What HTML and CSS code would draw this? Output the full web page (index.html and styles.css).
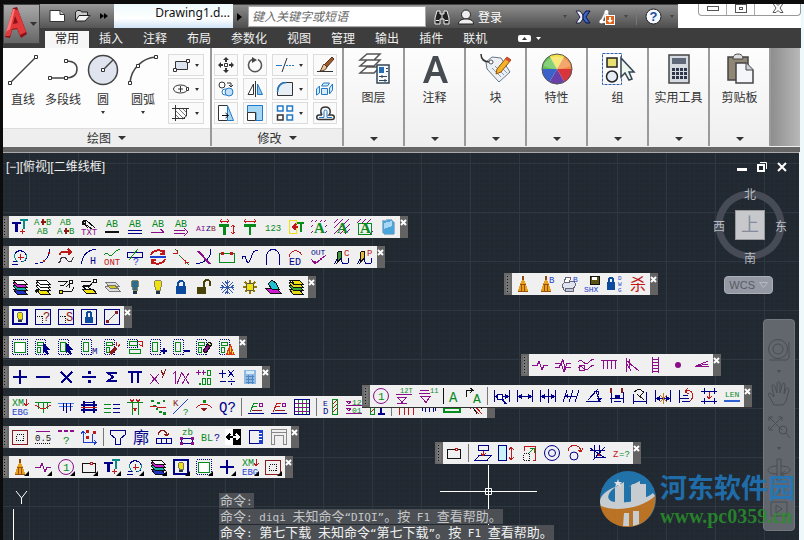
FILE: index.html
```html
<!DOCTYPE html>
<html lang="zh-CN">
<head>
    <meta charset="UTF-8">
    <meta name="viewport" content="width=device-width, initial-scale=1.0">
    <title>Drawing1.dwg</title>
    <link rel="stylesheet" href="styles.css">
</head>
<body>
<div class="app">
    <header class="header">
        <button class="logo" aria-label="应用程序菜单">
            <svg width="36" height="38" viewBox="0 0 36 38">
                <path fill="#8c1016" d="M1 32 9 3l4-1 10 27-6 4-4-9-5 1-2 8z"/>
                <path fill="#e23a3c" d="M1 31 9 4l5 1 8 22-6 3-3-7-5 1-2 7z"/>
                <path fill="#f77" d="M9 4l2 0-5 20-4 3z"/>
                <path fill="#8c1016" d="M9 19l2-8 3 7z"/>
                <path fill="#333" d="M26 17h7l-3.500 4z"/>
            </svg>
        </button>
        <div class="header-main">
            <div class="titlebar">
                <div class="quick">
                    <button aria-label="新建"><svg width="17" height="14" viewBox="0 0 17 14"><path fill="#fff" stroke="#333" d="M1 1.500h10l4.500 4v7H1z"/><path fill="#ccc" stroke="#333" d="M11 1.500v4h4.500"/></svg></button>
                    <button aria-label="打开"><svg width="17" height="14" viewBox="0 0 17 14"><path fill="#ccc" stroke="#222" d="M1.500 12V3l2-1.500h3l1 1.500h6v3"/><path fill="#f4f4f4" stroke="#222" d="M1.500 12 5 6.500h11L11 12z"/></svg></button>
                    <button aria-label="更多"><svg width="10" height="8" viewBox="0 0 10 8"><path d="M1 1l4 3-4 3zM5 1l4 3-4 3z"/></svg></button>
                </div>
                <div class="doc-title">Drawing1.d...</div>
                <div class="infobar">
                    <button class="expand" aria-label="展开"><svg width="5" height="8" viewBox="0 0 5 8"><path d="M0 0l5 4-5 4z"/></svg></button>
                    <input class="search" type="text" placeholder="键入关键字或短语" aria-label="搜索">
                    <button aria-label="查找"><svg width="16" height="16" viewBox="0 0 16 16"><path fill="#222" stroke="#eee" d="M3 2h3v3h4V2h3l2 7v6h-5v-5H6v5H1V9z"/><path stroke="#eee" d="M2 11.500h3M11 11.500h3M8 5v5"/></svg></button>
                    <button class="signin"><svg width="16" height="16" viewBox="0 0 16 16"><circle cx="8" cy="5.500" r="4.500" fill="#eee" stroke="#222"/><path fill="#eee" stroke="#222" d="M.5 15c0-4 4-5 7.500-5s7.500 1 7.500 5z"/></svg>登录</button>
                    <span class="spacer"></span>
                    <span class="caret dim"></span>
                    <button aria-label="Exchange"><svg width="16" height="14" viewBox="0 0 16 14"><path fill="#e8eefc" stroke="#224" d="M1 1h4l3 4v4l-3 4H1l4-6z"/><path fill="#3565c4" stroke="#114" d="M15 1h-4L8 5v4l3 4h4l-4-6z"/></svg></button>
                    <button aria-label="通讯"><svg width="17" height="16" viewBox="0 0 17 16"><path stroke="#eee" stroke-width="2" fill="none" d="M7 3 2 13h6M7 3l4 7"/><circle cx="7.500" cy="3" r="2" fill="#fff"/><circle cx="2.500" cy="12.500" r="2" fill="#fff"/><rect x="6.500" y="6.500" width="9" height="9" fill="#dd641c" stroke="#fff"/><path fill="#fff" d="M10 8h2v3h2l-3 3-3-3h2z"/></svg></button>
                    <span class="caret dim"></span>
                    <span class="rule"></span>
                    <button aria-label="帮助"><svg width="17" height="17" viewBox="0 0 17 17"><circle cx="8.500" cy="8.500" r="7.500" fill="#f4f8ff" stroke="#222"/><text x="8.500" y="13" font-size="13" font-weight="bold" text-anchor="middle" fill="#1d4aa0">?</text></svg></button>
                    <span class="caret dim"></span>
                </div>
                <div class="win-area">
                    <div class="win-buttons">
                        <button aria-label="最小化"><svg width="12" height="5" viewBox="0 0 12 5"><rect x=".5" y=".5" width="11" height="4" fill="#fff" stroke="#555"/></svg></button>
                        <button aria-label="最大化"><svg width="12" height="9" viewBox="0 0 12 9"><rect x=".5" y=".5" width="11" height="8" fill="#fff" stroke="#555"/><rect x="4.500" y="3.500" width="3" height="2" fill="#fff" stroke="#555"/></svg></button>
                        <button class="wide" aria-label="关闭"><svg width="12" height="10" viewBox="0 0 12 10"><path fill="#fff" stroke="#555" d="M1 .5h3l2 2 2-2h3L8 5l3 4.500H8l-2-2-2 2H1L4 5z"/></svg></button>
                    </div>
                </div>
            </div>
            <nav class="tabs">
                <a class="tab active" href="#">常用</a>
                <a class="tab" href="#">插入</a>
                <a class="tab" href="#">注释</a>
                <a class="tab" href="#">布局</a>
                <a class="tab" href="#">参数化</a>
                <a class="tab" href="#">视图</a>
                <a class="tab" href="#">管理</a>
                <a class="tab" href="#">输出</a>
                <a class="tab" href="#">插件</a>
                <a class="tab" href="#">联机</a>
                <button class="ribbon-toggle" aria-label="最小化功能区"><svg width="24" height="7" viewBox="0 0 24 7"><rect width="13" height="7" rx="2" fill="#fff"/><path fill="#333" d="M4 5h5L6.500 2z"/><path fill="#fff" d="M18 2h5l-2.500 3z"/></svg></button>
            </nav>
        </div>
    </header>

    <section class="ribbon">
        <div class="panel draw">
            <div class="panel-body">
                <button class="big"><svg width="32" height="32" viewBox="0 0 32 32"><path class="ln" d="M3 29 29 3"/><path class="pt" d="M1.500 27.500h3v3h-3zM27.500 1.500h3v3h-3z"/></svg>直线</button>
                <button class="big"><svg width="32" height="32" viewBox="0 0 32 32"><path class="ln" d="M3 24h15c7 0 12-2 12-9s-6-8-11-8"/><path class="pt" d="M1.500 22.500h3v3h-3zM17.500 22.500h3v3h-3zM17.500 5.500h3v3h-3z"/></svg>多段线</button>
                <button class="big"><svg width="32" height="32" viewBox="0 0 32 32"><circle cx="16" cy="16" r="14.500" fill="#dfe4ef" stroke="#444" stroke-width="1.500"/><path class="ln" d="M16 16 26 6"/><path class="pt" d="M14.500 14.500h3v3h-3z"/></svg>圆<span class="caret"></span></button>
                <button class="big"><svg width="32" height="32" viewBox="0 0 32 32"><path class="ln" d="M3 29C4 15 15 4 29 3"/><path class="pt" d="M1.500 27.500h3v3h-3zM9.500 10.500h3v3h-3zM27.500 1.500h3v3h-3z"/></svg>圆弧<span class="caret"></span></button>
                <div class="small-grid one">
                    <button class="small split" aria-label="矩形"><svg width="18" height="16" viewBox="0 0 18 16"><path fill="#dde3ee" stroke="#333" d="M3.500 4.500h12v8h-12z"/><path class="pt" d="M1.500 11.500h3v3h-3zM14.500 2.500h3v3h-3z"/></svg><span class="caret"></span></button>
                    <button class="small split" aria-label="椭圆"><svg width="18" height="16" viewBox="0 0 18 16"><ellipse cx="8.500" cy="8" rx="7" ry="4" fill="none" stroke="#333"/><path stroke="#333" d="M8.500 5v6M6 8h5"/><path class="pt" d="M14.500 6.500h2v3h-2z"/></svg><span class="caret"></span></button>
                    <button class="small split" aria-label="图案填充"><svg width="18" height="16" viewBox="0 0 18 16"><path fill="none" stroke="#333" d="M3.500 0v16M0 3.500h17M14.500 3v8l-4 3M0 13.500h13"/><path stroke="#777" d="M4 6l7 7M4 10l3 3M7 4l7 7M11 4l3 3"/></svg><span class="caret"></span></button>
                </div>
            </div>
            <button class="panel-title">绘图<span class="caret large"></span></button>
        </div>

        <div class="panel modify">
            <div class="panel-body">
                <div class="small-grid">
                    <button class="small" aria-label="移动"><svg width="16" height="16" viewBox="0 0 16 16"><path fill="#333" d="M8 0l3 3H9v2H7V3H5zM8 16l3-3H9v-2H7v2H5zM0 8l3-3v2h2v2H3v2zM16 8l-3-3v2h-2v2h2v2z"/><path class="pt" d="M6.500 6.500h3v3h-3z"/></svg></button>
                    <button class="small" aria-label="旋转"><svg width="16" height="16" viewBox="0 0 16 16"><path fill="none" stroke="#555" stroke-width="1.500" d="M11 2.500A6.500 6.500 0 1 1 5 2.500"/><path fill="#444" d="M5 0l5 3-5 3z"/></svg></button>
                    <button class="small split" aria-label="修剪"><svg width="18" height="16" viewBox="0 0 18 16"><path stroke="#2279c8" d="M0 8.500h6M10 8.500h2M13 8.500h2M16 8.500h2"/><path stroke="#333" d="M11 1 6 15"/></svg><span class="caret"></span></button>
                    <button class="small" aria-label="删除"><svg width="18" height="16" viewBox="0 0 18 16"><path stroke="#333" d="M1 14.500h16"/><path fill="#9c5a28" stroke="#532" d="M16 0l2 2-7 8-3-2z"/><path fill="#e8c898" stroke="#532" d="M8 7l3 3c-1 3-4 4-7 4 2-2 2-5 4-7z"/></svg></button>
                    <button class="small" aria-label="复制"><svg width="16" height="16" viewBox="0 0 16 16"><circle cx="4" cy="4" r="3" fill="#fff" stroke="#333"/><circle cx="7" cy="11" r="3" fill="#fff" stroke="#2279c8"/><circle cx="11" cy="11" r="4" fill="#bfe0f8" stroke="#2279c8"/><path fill="none" stroke="#333" d="M9 2h4v4M11 4l2 2 2-2"/></svg></button>
                    <button class="small" aria-label="镜像"><svg width="16" height="16" viewBox="0 0 16 16"><path fill="#fff" stroke="#333" d="M1 13.500 6.500 3v10.500z"/><path stroke="#333" d="M8.500 0v16"/><path fill="#8cc6f0" stroke="#2279c8" d="M15.500 13.500 10.500 3v10.500z"/></svg></button>
                    <button class="small split" aria-label="圆角"><svg width="18" height="16" viewBox="0 0 18 16"><path fill="#e8eef5" stroke="#333" d="M9 1.500h7.500v13h-15V10C1.500 5 4 1.500 9 1.500"/><path fill="none" stroke="#2279c8" stroke-width="1.500" d="M1.500 11c0-6 4-9.500 9-9.500"/></svg><span class="caret"></span></button>
                    <button class="small" aria-label="分解"><svg width="18" height="16" viewBox="0 0 18 16"><path fill="#d6ecfb" stroke="#2279c8" d="M5.500 7.500h6v6h-6zM5.500 5l2-3h6l-2 3zM13.500 7l3-4v6l-3 4zM3.500 5v7l-3 2V8z"/></svg></button>
                    <button class="small" aria-label="拉伸"><svg width="16" height="16" viewBox="0 0 16 16"><path fill="#fff" stroke="#333" d="M9 .5H.5v15h9"/><path fill="#a8d8f4" stroke="#2279c8" d="M9.500.5 15.500 15.500h-6z"/><path stroke="#111" fill="none" d="M4 10.500h6M7.500 8l3 2.500-3 2.500"/></svg></button>
                    <button class="small" aria-label="缩放"><svg width="16" height="16" viewBox="0 0 16 16"><path fill="#a8d8f4" stroke="#2279c8" d="M.5.500h15v15H9v-8H.5z"/><path fill="#fff" stroke="#333" d="M.5 7.500h8v8h-8z"/></svg></button>
                    <button class="small split" aria-label="阵列"><svg width="18" height="16" viewBox="0 0 18 16"><path fill="#fff" stroke="#2279c8" stroke-width="1.500" d="M1.500 1h5.500v5H1.500zM11 1h5.500v5H11zM11 10h5.500v5H11z"/><path fill="#fff" stroke="#333" stroke-width="1.500" d="M1.500 10h5.500v5H1.500z"/></svg><span class="caret"></span></button>
                    <button class="small" aria-label="偏移"><svg width="18" height="16" viewBox="0 0 18 16"><path fill="none" stroke="#333" stroke-width="1.500" d="M6 10H3a2 2 0 0 0 0 4.500h13a2 2 0 0 0 0-4.500h-3c2-2 2-8-3.500-8S4 7 6 10"/><path fill="none" stroke="#2279c8" d="M3 12.500h5V6.500a1.500 1.500 0 0 1 3 0v6h5"/></svg></button>
                </div>
            </div>
            <button class="panel-title">修改<span class="caret large"></span></button>
        </div>

        <button class="panel single">
            <svg width="32" height="32" viewBox="0 0 32 32"><path fill="#fff" stroke="#555" stroke-width="1.500" d="M2 20 9 14h13l-6 6zM2 13 9 7h13l-6 6zM2 7l7-6h13l-6 6z"/><path fill="#f5f9fd" stroke="#345" stroke-width="1.500" d="M19 12h12v18H19z"/><path fill="#246cb4" d="M21 14h5v6h-5z"/><path stroke="#345" d="M28 15.500h2M28 18.500h2M21 23.500h8M21 27.500h8M24 22v3M27 26v3"/></svg>
            图层<span class="caret large"></span></button>
        <button class="panel single">
            <svg width="32" height="32" viewBox="0 0 32 32"><path fill="#474b52" fill-rule="evenodd" d="M14 3h5l10 27h-5l-3-7h-9l-3 7H4zM13 19h7L16.500 8z"/></svg>
            注释<span class="caret large"></span></button>
        <button class="panel single">
            <svg width="32" height="32" viewBox="0 0 32 32"><path fill="#edf1f6" stroke="#678" d="M6 9l6-5 9 1 9 14-11 10L7 16z"/><path fill="none" stroke="#333" stroke-width="1.500" d="M1 1c0 6 4 8 9 8"/><circle cx="11" cy="9" r="2" fill="#fff" stroke="#555"/><path stroke="#89a" d="M12 15l9 9M15 13l9 9M19 12l8 8"/><path fill="#f3b229" stroke="#8a5410" d="M27 4l4 3-10 12-5 2 1-5z"/><path fill="#d43" d="M27 4l4 3-2 2-4-3z"/></svg>
            块<span class="caret large"></span></button>
        <button class="panel single">
            <svg width="32" height="32" viewBox="0 0 32 32"><path fill="#f4e04c" d="M16 16 8.500 3a15 15 0 0 1 15 0z"/><path fill="#f08a3c" d="M16 16 23.500 3A15 15 0 0 1 31 16z"/><path fill="#d8343c" d="M16 16h15a15 15 0 0 1-7.500 13z"/><path fill="#6a3fa8" d="M16 16l7.500 13a15 15 0 0 1-15 0z"/><path fill="#3a62c8" d="M16 16 8.500 29A15 15 0 0 1 1 16z"/><path fill="#5fc04c" d="M16 16H1A15 15 0 0 1 8.500 3z"/><path fill="#fff" opacity=".25" d="M2 13a15 15 0 0 1 28 0c-9 4-19 4-28 0z"/><circle cx="16" cy="16" r="15" fill="none" stroke="#555"/></svg>
            特性<span class="caret large"></span></button>
        <button class="panel single">
            <svg width="32" height="32" viewBox="0 0 32 32"><path fill="none" stroke="#2f5fae" stroke-dasharray="3 1" d="M.5.500h19v31H.5z"/><path fill="#e8e070" stroke="#222" stroke-width="1.500" d="M5 5h10v9H5z"/><circle cx="10" cy="23.500" r="5.500" fill="#e4ecf5" stroke="#222" stroke-width="1.500"/><path fill="#eef7ee" stroke="#345" stroke-width="1.500" d="M19 5v19l4-4 4 7 3-1-3-7h5z"/></svg>
            组<span class="caret large"></span></button>
        <button class="panel single">
            <svg width="32" height="32" viewBox="0 0 32 32"><path fill="#d6dae2" stroke="#444" stroke-width="1.500" d="M6 2h20v28H6z"/><path fill="#60697a" d="M9 5h14v6H9z"/><path stroke="#2e3848" stroke-width="3" stroke-dasharray="3 1" d="M9 16.500h15M9 20.500h15M9 24.500h15"/></svg>
            实用工具<span class="caret large"></span></button>
        <button class="panel single">
            <svg width="32" height="32" viewBox="0 0 32 32"><path fill="#8f8674" stroke="#444" stroke-width="1.500" d="M4 4h20v23H4z"/><path fill="#ddd" stroke="#444" d="M9 5c0-3 3-4 5-4s5 1 5 4v1H9z"/><path fill="#f4f6fa" stroke="#444" stroke-width="1.500" d="M12 10h10l7 7v13H12z"/><path fill="#cdd3dc" stroke="#444" d="M22 10v7h7"/></svg>
            剪贴板<span class="caret large"></span></button>
        <div class="ribbon-rest"></div>
    </section>

    <main class="canvas">
        <div class="view-label">[−][俯视][二维线框]</div>

        <div class="dock">
            <div class="toolbar" data-tools="tt abTop abBottom txt abLine abDouble abHalf abArrow aizb tBoth tWide n123 tInsert hatch1 hatch2 hatch3 book"></div>
            <div class="toolbar" data-tools="findArc joinArc redCurve arcH waveOnt boxAsk turn scatterLine crossArc rail wave arch ed out penC penP"></div>
            <div class="toolbar" data-tools="layers layerPick layerNode layerMatch layerOne bulbOff bulb lock unlock snow sun layerCyan layerGreen"></div>
            <div class="toolbar" data-tools="frameBulb frameAsk frameS frameLock frameLine"></div>
            <div class="toolbar" data-tools="sel selPick selArrow selM selWand selCopy selPlus selMinus selErase selFire"></div>
            <div class="toolbar" data-tools="plus minus times divide sigma pi power inverse digits operators calc"></div>
            <div class="toolbar" data-tools="xmebg beamRed beamBlue beamThick dashes legs scatter kAsk pin qAsk | sectGreen sectRed grid | ebd levels section | pilesRed pilesBlue slab steel"></div>
            <div class="toolbar" data-tools="frameRed scale05 askDash ucs | funnel kuo tiles zb bl swap panel gate"></div>
            <div class="toolbar flyouts" data-tools="broom breakLine circle1 rectDot tt findArc layers frameBulb sel plus xmebg frameRed"></div>
        </div>

        <div class="toolbar float purge" data-tools="broom broomB printB shx dwg kill"></div>
        <div class="toolbar float symbols" data-tools="breakLine breakDouble waves comb fan ladder dot angle"></div>
        <div class="toolbar float dims" data-tools="circle1 level12 levelMark axisA cornerA | dimFind dimLinear dimSplit dimSkew dimAngle dimBreak dimEdit dimJoin dimBack dimBox len"></div>
        <div class="toolbar float edit" data-tools="rectDot | project stretch corner rings spin cross zAsk"></div>

        <div class="doc-buttons">
            <button aria-label="最小化"><svg width="10" height="10" viewBox="0 0 10 10"><path fill="#fff" d="M0 6h10v3H0z"/></svg></button>
            <button aria-label="还原"><svg width="10" height="10" viewBox="0 0 10 10"><path fill="none" stroke="#fff" d="M3 .5h6.500V7"/><path fill="none" stroke="#fff" stroke-width="2" d="M1 3h6v6H1z"/></svg></button>
            <button aria-label="关闭"><svg width="10" height="10" viewBox="0 0 10 10"><path stroke="#fff" stroke-width="2" d="M1 1l8 8M9 1 1 9"/></svg></button>
        </div>

        <div class="viewcube">
            <span class="north">北</span>
            <span class="west">西</span>
            <button class="face">上</button>
            <span class="east">东</span>
            <span class="south">南</span>
        </div>
        <button class="wcs">WCS<svg width="9" height="6" viewBox="0 0 9 6"><path fill="none" stroke="#b5b9c2" d="M.5.500h8l-4 5z"/></svg></button>

        <div class="navbar">
            <button aria-label="全导航控制盘"><svg width="24" height="24" viewBox="0 0 24 24"><circle cx="11" cy="11" r="9.500"/><circle cx="11" cy="11" r="5"/><path d="M2 22h18l2-2V4"/></svg></button>
            <span class="caret"></span>
            <button aria-label="平移"><svg width="24" height="26" viewBox="0 0 24 26"><path d="M7 24 2 15c-2-3 1-4 3-1l2 2L5 6c0-3 2-3 3 0l2 6V3c0-3 3-3 3 0v9l2-8c1-3 3-2 3 0l-1 9 2-5c1-2 3-1 3 1l-3 11-3 4z"/></svg></button>
            <button aria-label="缩放"><svg width="24" height="24" viewBox="0 0 24 24"><path d="M2 2l13 13M15 2 2 15M2 6V2h4M11 2h4v4M2 11v4h4"/><circle cx="16" cy="15" r="4"/><path d="M19 18l4 5"/></svg></button>
            <span class="caret"></span>
            <button aria-label="动态观察"><svg width="24" height="24" viewBox="0 0 24 24"><path d="M10 1h4v22h-4zM10 8C4 8 1 10 1 12s3 4 9 4M14 8c6 0 9 2 9 4s-3 4-9 4M18 13l-4 3 4 3"/></svg></button>
            <span class="caret"></span>
            <button aria-label="ShowMotion"><svg width="18" height="16" viewBox="0 0 18 16"><path d="M1 1h16v14H1zM6 4l6 4-6 4z"/></svg></button>
        </div>

        <svg class="crosshair" width="97" height="97" viewBox="0 0 97 97"><path d="M0 48.500h97M48.500 0v97"/><path d="M45.500 45.500h6v6h-6z"/></svg>
        <svg class="ucs-axis" width="20" height="54" viewBox="0 0 20 54"><path d="M5 1l5.500 7L16 1M10.500 8v6M2.500 19v35"/></svg>

        <div class="command">
            <p class="old">命令<code>:</code></p>
            <p class="old">命令<code>: diqi </code>未知命令<code>“DIQI”</code>。按<code> F1 </code>查看帮助。</p>
            <p>命令<code>: </code>第七下载<code> </code>未知命令<code>“</code>第七下载<code>”</code>。按<code> F1 </code>查看帮助。</p>
        </div>

        <div class="watermark">
            <svg width="58" height="58" viewBox="0 0 58 58">
                <circle cx="29" cy="29" r="28" fill="#2380c0"/>
                <path fill="#d57f22" d="M1 34c8 8 45 4 55-10 3 16-9 33-27 33C15 57 3 48 1 34z"/>
                <path fill="#e4e9ed" d="M2 36c-4-8 4-15 14-19-7 6-9 11-4 14 12 4 34-1 42-8l2 3C45 37 18 43 2 36z"/>
                <path fill="#e4e9ed" d="M16 35V18l-3 1 12-7v23zM32 33V16l-3 1 12-6v22zM32 14h15v17h-7V18zM25 43h5v13h-6zM34 41h6v13l-6 2z"/>
                <path fill="#fff" d="M19 9l1 3h3l-2 2 1 3-3-2-3 2 1-3-2-2h3z"/>
            </svg>
            <div>
                <div class="site">河东软件园</div>
                <div class="url">www.pc0359.cn</div>
            </div>
        </div>
    </main>
</div>

<script>
    const NAVY = '#00008b', GREEN = '#078a1c', PURPLE = '#8a0d8a', RED = '#c01818', DARK = '#8b1a1a',
          BLACK = '#111', BLUE = '#1f3fd0', TEAL = '#078a8a', YELLOW = '#f0e010';

    // line, filled shape, text
    const l = (c, d, w = 1) => `<path fill="none" stroke="${c}" stroke-width="${w}" d="${d}"/>`;
    const f = (c, d, s = 'none') => `<path fill="${c}" stroke="${s}" d="${d}"/>`;
    const t = (c, x, y, s, size = 9) => `<text fill="${c}" x="${x}" y="${y}" font-size="${size}">${s}</text>`;
    const dots = (c, d) => `<path fill="none" stroke="${c}" stroke-dasharray="1 1" d="${d}"/>`;
    const o = (c, x, y, r, fill = 'none') => `<circle cx="${x}" cy="${y}" r="${r}" fill="${fill}" stroke="${c}"/>`;

    const ab = t(GREEN, 2, 8, 'AB', 10);
    const bigA = t(GREEN, 3, 14, 'A', 15).replace('<text', '<text class="serif"');
    const selBox = dots(NAVY, 'M.5.500h10v15H.5z') + l(GREEN, 'M2.500 3.500h5v9h-5z');
    const selPart = dots(NAVY, 'M.5.500h10v15H.5z') + l(GREEN, 'M2.500 3.500h6v3h-6zM2.500 8.500h3v5h-3z');
    const blueFrame = l(NAVY, 'M.5.500h15v15H.5z');
    const stack = (a, b, c) => f(c, 'M1 10l4 5h10l-4-5z', BLACK) + f(b, 'M1 7l4 4h10l-4-5z', BLACK) + f(a, 'M1 4l4 4h10l-4-5z', BLACK) + f('#fff', 'M1 1h10l4 4H5z', BLACK);
    const bulbAt = (c) => f(c, 'M8 1c3 0 4 2 4 4 0 3-2 3-2 6H6c0-3-2-3-2-6 0-2 1-4 4-4z', '#886') + f('#234', 'M6 12h4v3H6z');
    const lockAt = f('#0b4a9c', 'M3 7h10v8H3z') + l('#0b4a9c', 'M5 8V5a3 3 0 0 1 6 0v3', 2);
    const cursor = f(NAVY, 'M8 4v10l2-2 2 4 2-1-2-4h4z');
    const dim = l(NAVY, 'M.5 2v12M15.500 2v12M1 8.500h14') + f(NAVY, 'M1 8.500l4-3v6zM15 8.500l-4-3v6z');
    const broomAt = f('#8a4a10', 'M7 0h2v5H7z') + f('#e8a020', 'M7 4h2l2 4 2 7H3l2-7z') + l('#9a5208', 'M5 8.500h6M7 9l-1 6M9 9l1 6M3 15.500h10');
    const pen = (c) => l(NAVY, 'M0 15c4-4 3-8 6-8s0 8 4 8 5-1 5-6') + f(c, 'M4 3l3-1 1 6-5 6z', BLACK);

    const icons = {
        tt: f(NAVY, 'M0 3h9v2H6v8H3V5H0z') + f(TEAL, 'M8 0h8v2h-3v8h-2V2H8z') + l(RED, 'M10.500 10v5M8 12.500h5'),
        abTop: t(GREEN, -1, 6, 'A', 9) + t(GREEN, 11, 6, 'B', 9) + l(DARK, 'M8 0v6M6 3h5', 2) + t(GREEN, 2, 15, 'AB', 9),
        abBottom: t(GREEN, 2, 6, 'AB', 9) + t(GREEN, -1, 15, 'A', 9) + t(GREEN, 11, 15, 'B', 9) + l(DARK, 'M8 9v6M6 12h5', 2),
        txt: l(BLACK, 'M2 1l3 0 9 8M1 3l10 7M4 6l3 3') + o(BLACK, 3, 4, 2) + t(PURPLE, 0, 16, 'TXT', 9),
        abLine: ab + l(BLACK, 'M1 13h14', 2),
        abDouble: ab + l(NAVY, 'M1 11.500h14M1 14.500h14'),
        abHalf: ab + l(PURPLE, 'M1 13.500h13M10 10l4 3'),
        abArrow: ab + l(PURPLE, 'M1 11.500h11M1 14.500h11M11 9l4 4-4 4'),
        aizb: t(PURPLE, 0, 12, 'AI', 8) + t(NAVY, 10, 12, 'Z', 8) + t(DARK, 15, 12, 'B', 8),
        tBoth: f(GREEN, 'M0 5h10v3H7v8H4V8H0z') + l(RED, 'M1 2.500h9M3 0L1 2l2 2M8 0l2 2-2 2M14.500 6v9M12 8l2-2 2 2M12 13l2 2 2-2'),
        tWide: f(GREEN, 'M2 5h12v3H9v8H7V8H2z') + l(RED, 'M2 2.500h12M4 0L2 2l2 2M12 0l2 2-2 2'),
        n123: t(GREEN, 0, 12, '123', 9),
        tInsert: l(YELLOW, 'M1.500 1.500h7v13h-7z') + l(RED, 'M5 8h5M8 5L5 8l3 3', 2) + f(GREEN, 'M9 3h7v2h-2v8h-2V5H9z'),
        hatch1: `<path stroke="${PURPLE}" stroke-dasharray="3 2" fill="none" d="M0 3l3-3M4 3l3-3M9 3l3-3M13 3l3-3M0 8l2-2M0 14l2-2M14 8l2-2M14 14l2-2"/>` + bigA,
        hatch2: l(PURPLE, 'M0 4l4-4M0 9L9 0M0 15L15 0M6 15L16 5M11 15l5-5') + bigA,
        hatch3: l(PURPLE, 'M0 4l4-4M5 4l4-4M10 4l4-4M13 15l3-3') + l(GREEN, 'M1.500 4.500h13v11h-13z') + bigA,
        book: f('#4ba3dc', 'M2 2l9-2 3 3v12l-9 1-3-3z', '#9fb6c8') + f('#a8d6f4', 'M4 4l8-2v5l-8 3z'),

        findArc: l(NAVY, 'M0 15.500h6M1 13l4-1M3 5a6 6 0 0 1 11 1c1 4-1 7-5 7') + l(TEAL, 'M3 5c-1 4 0 6 3 8M14 5c1 4-1 7-4 8') + l(RED, 'M8.500 5v6M6 8.500h6'),
        joinArc: l(NAVY, 'M0 14.500h3M5 13.500h3M14.500 0c0 4-1 8-4 11') + f(RED, 'M8 11h2v2H8zM13 3h2v2h-2z'),
        redCurve: l(RED, 'M2 6c0-5 5-2 8-3h3M10 0l3 3-3 3', 2) + l('#434', 'M0 14c4 0 1-6 5-6s4 5 7 5 2-4 4-5'),
        arcH: l(NAVY, 'M.5 15C1 8 5 1 15 .5') + t(NAVY, 9, 15, 'H', 10),
        waveOnt: l(GREEN, 'M0 6c4-5 5 3 8 0s4-6 8-5') + t(RED, 0, 16, 'ONT', 9),
        boxAsk: l(NAVY, 'M.5 3.500h15v5H.5z') + l(GREEN, 'M2 11 11 0') + t(BLUE, 6, 16, '?', 10),
        turn: l(RED, 'M1 6c2-6 12-6 13-1M14 1v4h-4M15 10c-2 6-12 6-13 1M2 15v-4h4', 2) + l(BLUE, 'M0 8h16', 2),
        scatterLine: l(GREEN, 'M2 0l3 3M6 6l3 3M11 11l5 5') + l(RED, 'M0 4h4M4 1v4M9 9l3 3M12 13h4M12 11v4'),
        crossArc: l(NAVY, 'M15 0c0 9-5 13-15 15') + l(PURPLE, 'M2 2l12 13', 2),
        rail: l(GREEN, 'M.5 4.500h15v9H.500z') + f(RED, 'M2 3h3v3H2zM11 3h3v3h-3z'),
        wave: l(NAVY, 'M0 10c1-4 3-4 4 0s3 5 5-1 3-8 7-7'),
        arch: l(NAVY, 'M1.500 16V8c0-10 13-10 13 0v8'),
        ed: l(RED, 'M1 8c2-8 9-8 13-2') + t(NAVY, 1, 16, 'ED', 10),
        out: t(NAVY, 0, 6, 'OUT', 8) + l(PURPLE, 'M0 10l4 5 11-9') + f(PURPLE, 'M3 12h2v3H3zM9 9h2v2H9z'),
        penC: pen('#3c9a3c') + t(RED, 10, 7, 'C', 9),
        penP: pen('#e8b838') + t(RED, 10, 7, 'P', 9),

        layers: stack('#d018d0', '#10b0a0', '#2030c0'),
        layerPick: stack('#fff', '#fff', YELLOW) + f(BLACK, 'M0 11h4l-3 4z'),
        layerNode: l(BLACK, 'M0 2h10l-4 4H2M5 12h9l2-4M8 8l3-3M11 9V5') + o(BLACK, 13, 3, 2, '#fff') + o(BLACK, 3, 13, 2, YELLOW),
        layerMatch: l(BLACK, 'M0 2h10M2 6h6M7 9l5-6M7 6v3h3') + f('#fff', 'M1 7h5l3 3H5z', BLACK) + f(YELLOW, 'M1 10l4 4h10l-3-4z', BLACK) + o(BLACK, 14, 2, 2, '#fff'),
        layerOne: f('#ddd', 'M1 8l4 4h11l-4-5zM1 3h10l4 4H5z', '#777') + f('#d8c820', 'M3 6h8l2 3H6z', '#776'),
        bulbOff: bulbAt('#2f6d88'),
        bulb: bulbAt(YELLOW),
        lock: lockAt,
        unlock: f('#4a4308', 'M1 8h9v7H1z') + l('#4a4308', 'M8 8V4a3 3 0 0 1 6 0v3', 2),
        snow: l('#3458a8', 'M8.500 1v14M1 8.500h14M3 3l11 11M14 3 3 14M6 2l2 3 3-3M6 15l2-3 3 3M2 6l3 2-3 3M15 6l-3 2 3 3'),
        sun: l('#907800', 'M3 3l10 10M13 3 3 13M8 1v14M1 8h14', 2) + o('#554', 8, 8, 4, YELLOW),
        layerCyan: f('#d018d0', 'M0 9l5 5h11l-5-5z', BLACK) + f('#20c0d0', 'M3 5l4-4 4 3 3 6H7z', BLACK),
        layerGreen: stack('#e0d818', '#38a838', '#e0d818') + f(YELLOW, 'M3 1h8l4 4H6z', BLACK),

        frameBulb: l(NAVY, 'M1 1h14v14H1z', 2) + f(YELLOW, 'M8 3c3 0 4 4 2 6v1H6V9C4 7 5 3 8 3z', '#776') + f('#234', 'M6 11h4v2H6z'),
        frameAsk: blueFrame + dots(BLACK, 'M2 7.500h6M7.500 7v7') + t(DARK, 8, 12, '?', 12),
        frameS: blueFrame + dots(BLACK, 'M2 7.500h6M7.500 7v7') + t(DARK, 8, 12, 'S', 12),
        frameLock: blueFrame + f('#0b4a9c', 'M4 8h8v6H4z') + l('#0b4a9c', 'M6 8V5c0-3 4-3 4 0v3', 2),
        frameLine: blueFrame + l('#555', 'M4 12 12 4') + f(DARK, 'M2 11h3v3H2zM11 2h3v3h-3z'),

        sel: dots(NAVY, 'M.5.500h15v15H.5z') + f('#fff', 'M2.500 3.500h11v10h-11z', GREEN),
        selPick: selPart + cursor,
        selArrow: selBox + cursor,
        selM: selBox + t(NAVY, 11, 15, 'M', 9),
        selWand: selPart + l(DARK, 'M6 15l6-6', 3) + l(RED, 'M12 7V3M14 8l2-3M9 5l1 1'),
        selCopy: l(GREEN, 'M2.500 2.500h8v4h-8zM2.500 10.500h11v4h-11z') + dots(NAVY, 'M.5.500h10v8H.5z') + l(RED, 'M11 2.500h4v5M12 5l2 2 2-2'),
        selPlus: selBox + l(NAVY, 'M14 9v6M11 12h6', 2),
        selMinus: selBox + l(NAVY, 'M11 12h6', 2),
        selErase: selPart + f(PURPLE, 'M7 12l6-9 3 2-6 9z', BLACK) + f('#dd8', 'M11 5l2-2 3 2-2 2z', BLACK),
        selFire: selPart + f('#d83818', 'M7 16l2-6 2-5 1-1 1 5 3 7z') + l(YELLOW, 'M11 8v5M13.500 12v3M9.500 12v3'),

        plus: l(NAVY, 'M8 1v14M1 8h14', 2),
        minus: l(NAVY, 'M1 8h14', 2),
        times: l(NAVY, 'M3 3l11 11M14 3 3 14', 2),
        divide: l(NAVY, 'M1 8h14', 2) + f(NAVY, 'M7 2h3v3H7zM7 11h3v3H7z'),
        sigma: l(NAVY, 'M13 4H4l5 4-5 4h9', 2),
        pi: l(NAVY, 'M1 3h14M5 3v11M11 3v11', 2),
        power: l(PURPLE, 'M0 5l9 10M9 5 0 15') + l(DARK, 'M11 1l2 5M16 0l-4 9'),
        inverse: l(PURPLE, 'M0 5l2-2v12M4 15l5-12') + l(PURPLE, 'M9 4l7 11M16 4 9 15'),
        digits: l(PURPLE, 'M0 3.500h5M2.500 1v5M6 3.500h4M7.500 1v5') + l(GREEN, 'M11.500 1.500h3v5h-3zM6.500 9.500h3v6h-3zM11.500 9.500h3v6h-3z') + f(GREEN, 'M3 14h2v2H3z'),
        operators: l(NAVY, 'M0 4.500h7M3.500 1v8M1 12.500h6M9 1l6 7M15 1 9 8M9 12.500h7M12.500 10v1M12.500 14v2'),
        calc: f('#8fb9e0', 'M2 1h12v14H2z') + f('#d6ecfa', 'M4 2h8v3H4z') + l('#4f86c0', 'M4 7.500h8M4 10.500h8M4 13.500h8M6.500 6v9M10.500 6v9'),

        xmebg: t(GREEN, 0, 7, 'XM', 10) + l(RED, 'M14.500 0v7M12 4l2 3 3-3') + t(BLUE, 0, 16, 'EBG', 9),
        beamRed: l(GREEN, 'M0 3.500h16M3.500 4v6M8.500 4v10M12.500 4v6') + l(RED, 'M0 6c3 0 4 4 8 4s5-4 8-4'),
        beamBlue: l('#3f86e8', 'M0 4.500h16M1 7.500h14') + l(NAVY, 'M5.500 4v8M8.500 4v10M12.500 4v8'),
        beamThick: l(NAVY, 'M0 6h16M0 11h16M3 2v12M13 2v12', 2) + l(RED, 'M0 8.500h16') + l(NAVY, 'M4 3.500h8'),
        dashes: l(GREEN, 'M0 5.500h7M0 9.500h7M0 13.500h7') + l(NAVY, 'M9 5.500h7M9 9.500h7M9 13.500h7'),
        legs: l(GREEN, 'M0 3.500h16M5.500 4v12M11.500 4v12') + l(RED, 'M3 0l2 3 2-3M9 0l2 3 2-3') + f(RED, 'M6 9h4l-2 4z'),
        scatter: f(GREEN, 'M1 1h3v2H1zM7 3h3v2H7zM13 1h2v2h-2zM3 6h3v2H3zM9 12h3v2H9zM13 13h3v3h-3zM6 9h2v2H6z') + l(RED, 'M0 8c5-4 8 4 16 0'),
        kAsk: t(DARK, 0, 7, 'K', 9) + l(BLUE, 'M0 15 15 0') + t(GREEN, 10, 16, '?', 9),
        pin: l(RED, 'M0 9c4-5 12-5 16 0') + f(GREEN, 'M7 1h3v3H7z') + f(DARK, 'M5 9h6l-3 4z'),
        qAsk: t(NAVY, 0, 13, 'Q?', 14),
        sectGreen: l(NAVY, 'M0 14.500h16') + l(GREEN, 'M2 13l4-9h4M5 7.500h4') + o(PURPLE, 13, 6, 2) + l(DARK, 'M4 11.500h10'),
        sectRed: l(NAVY, 'M0 14.500h16') + l(RED, 'M2 13l4-9h4M5 7.500h4') + o(PURPLE, 13, 6, 2) + l(DARK, 'M4 11.500h10'),
        grid: f('#fff', 'M1 1h14v14H1z') + l(GREEN, 'M4.500 1v14M8.500 1v14M12.500 1v14') + l(PURPLE, 'M1 4.500h14M1 8.500h14M1 12.500h14') + l(NAVY, 'M.5.500h15v15H.5z'),
        ebd: t(NAVY, 0, 7, 'E', 8) + t(NAVY, 0, 15, 'D', 9) + l(GREEN, 'M9.500.500h5v15h-5z') + l(RED, 'M10 5l4-4M10 9l4-4M10 13l4-4'),
        levels: l(PURPLE, 'M0 2h5L3 5zM0 6.500h16M0 9h5l-2 3zM0 14.500h16') + t(GREEN, 6, 6, '12', 8) + t(GREEN, 6, 14, '01', 8),
        section: l(GREEN, 'M1.500 3.500h4v12h-4z') + l(RED, 'M2 9l3-3M2 13l3-3') + l(NAVY, 'M9 4h7M12 4v10M9 15h7', 2),
        pilesRed: l(NAVY, 'M0 5.500h16') + l(RED, 'M1.500 6v10M6.500 6v10M10.500 6v10M15.500 6v10'),
        pilesBlue: l(GREEN, 'M0 4.500h16') + l(NAVY, 'M1 12l2-6M4.500 13V6M8.500 13V6M12.500 13V6M15 12l-1-6'),
        slab: l(GREEN, 'M0 13h16V9H0z', 2) + l(NAVY, 'M3.500 5v4M12.500 5v4'),
        steel: l(RED, 'M0 6l4 4M3 6l9 9M7 6l8 9') + l(BLACK, 'M6 8l4 7M10 5l5 5'),

        frameRed: l(DARK, 'M.5 1.500h15v14H.5z') + dots(BLACK, 'M4.500 5.500h7v6h-7z'),
        scale05: l(PURPLE, 'M1 2.500h14') + t(BLACK, 0, 12, '0.5', 9) + dots(BLACK, 'M0 14.500h16'),
        askDash: l(PURPLE, 'M0 2h4M6 2h4M12 2h4', 2) + t(GREEN, 5, 15, '?', 11),
        ucs: l(BLUE, 'M2.500 2v11h13M0 5l2-3 3 3M13 11l2 2-2 3M11.500 5v8') + f(RED, 'M5 1h3v3H5zM12 2h3v3h-3zM5 7h3v3H5z'),
        funnel: l(NAVY, 'M.5 1.500h15v4l-5 4v6h-5v-6l-5-4z'),
        kuo: t(NAVY, 0, 14, '廓', 16),
        tiles: l(NAVY, 'M.5 9.500h15v5H.5zM5.500 10v4M10.500 10v4') + l(DARK, 'M2 6c1-6 8-6 9 0M8 5l3 2 2-3'),
        zb: t(GREEN, 3, 6, 'zb', 9) + l(NAVY, 'M2.500 9.500h11v5h-11z') + f(PURPLE, 'M1 8h3v3H1zM12 8h3v3h-3zM1 13h3v3H1zM12 13h3v3h-3z'),
        bl: t(GREEN, -1, 12, 'BL', 10) + t(NAVY, 12, 12, '?', 10),
        swap: f('#fff', 'M0 0h8v16H0z') + f('#000', 'M8 0h8v16H8z') + l('#000', 'M1 8h7M5 5L2 8l3 3', 2) + l('#fff', 'M8 8h6M11 5l3 3-3 3', 2),
        panel: l(NAVY, 'M1.500 1.500h13v13h-13z') + f(BLUE, 'M11 1h4v14h-4z') + l('#fff', 'M11 4.500h3M11 7.500h3M11 10.500h3'),
        gate: l('#888', 'M.5.500h15v3H.5zM.5 4v11.500h3V6.500h9v9h3V4'),

        broom: broomAt,
        broomB: broomAt + t(BLUE, 11, 7, 'B', 9),
        printB: f('#e0e4ee', 'M1 9l4-4h8l2 4-4 5H3z', '#667') + f('#fff', 'M3 6l2-5h5l-2 6z', '#667') + f('#c0c8dc', 'M4 12h8v3H4z', '#667') + t(BLUE, 12, 6, 'B', 8),
        shx: f('#5a5410', 'M6 0h9v8H6z', BLACK) + f('#fff', 'M8 1h5v3H8z') + t(BLUE, 0, 16, 'SHX', 8),
        dwg: f('#0b4a9c', 'M0 6h8v8H0z') + l('#0b4a9c', 'M2 6V4c0-3 4-3 4 0v2', 2) + t(BLUE, 11, 4, 'D', 6) + t(BLUE, 11, 10, 'W', 6) + t(BLUE, 11, 16, 'G', 6),
        kill: t(RED, 0, 14, '杀', 16),
        breakLine: l(PURPLE, 'M0 8.500h5l2-4 3 8 2-4h4'),
        breakDouble: l(PURPLE, 'M0 6.500h6l2-4 2 9 2-5h4M0 10.500h4l2-4 3 8 2-4h5'),
        waves: l(PURPLE, 'M0 5c4-6 6 5 10 1s3-3 6-3M0 11c4-6 6 5 10 1s3-3 6-3') + o(PURPLE, 4, 11, 3),
        comb: l(PURPLE, 'M0 3.500h16M2.500 4v8M6.500 4v8M10.500 4v8M14.500 4v8'),
        fan: l(PURPLE, 'M2.500 1v14M2 3l13 11M2 3l9 8M2 5l5 9M5.500 2v10'),
        ladder: l(PURPLE, 'M5.500 0v16M11.500 0v16M5 2.500h6M5 5.500h6M5 8.500h6M5 11.500h6M5 14.500h6'),
        dot: `<circle class="smooth" cx="8" cy="8" r="3" fill="${PURPLE}"/>`,
        angle: l(PURPLE, 'M15 4 2 9.500h14M15 7 4 9'),
        circle1: o(PURPLE, 8, 8, 7.5).replace('<circle', '<circle class="smooth"') + t(GREEN, 5, 12, '1', 11),
        level12: l(PURPLE, 'M0 6.500h16M2 9.500h8l-4 5zM1 15.500h10') + t(GREEN, 4, 5, '12T', 7),
        levelMark: l(PURPLE, 'M0 5.500h11M2 8.500h9l-4 6zM1 2.500h9') + t(GREEN, 11, 5, '11', 7),
        axisA: l(BLACK, 'M1.500 0v16') + t(GREEN, 7, 14, 'A', 14),
        cornerA: l(BLACK, 'M1.500 9V2.500h7M5 0l3 2-3 3') + t(GREEN, 8, 15, 'A', 13),
        rectDot: l(BLACK, 'M1.500 4.500h13v9h-13z') + f('#fff', 'M9.500 3.500h2v2h-2z', RED),

        dimFind: dim + o(NAVY, 6, 9, 3, '#fff') + l(NAVY, 'M8 11l4 5', 2),
        dimLinear: dim,
        dimSplit: dim + l(NAVY, 'M8.500 1v14'),
        dimSkew: l(NAVY, 'M0 14 4 2M6 14l4-12M12 14l4-12M2 8.500h12') + f(NAVY, 'M2 8l3-2v4z'),
        dimAngle: l(NAVY, 'M0 13.500h15M2 12 12 1M10 4l4 9M8 3.500h4v3') + f(NAVY, 'M11 10h5l-3 4z'),
        dimBreak: l(NAVY, 'M1 10.500h14M2.500 4v11M14.500 4v11M5 13.500h7') + l(DARK, 'M2 0v5M13 0v5', 2) + f(NAVY, 'M6 7h5v4H6z'),
        dimEdit: l(NAVY, 'M1.500 6v10M14.500 4v12M2 13.500h13') + l(BLACK, 'M2 4l5-3 5 3-4 4 4 4M5 6l4 4'),
        dimJoin: l(NAVY, 'M.5 2v12M15.500 2v12M1 10.500h14') + f(NAVY, 'M1 10.500l4-3v6zM15 10.500l-4-3v6z') + l('#c07828', 'M8.500 5v11M5 7l7 7M12 7l-7 7'),
        dimBack: l(NAVY, 'M1.500 2v13M1 10.500h10M4 13.500h8M5 7.500h5') + l(RED, 'M7 4c6-5 11 4 5 9M10 0L7 4l4 2'),
        dimBox: l(NAVY, 'M0 3.500h16M3.500 0v6M13.500 0v6M0 13.500h16M3.500 10v6M13.500 10v6') + l(RED, 'M8.500 4v7M6 8l2 3 3-3'),
        len: t(GREEN, 1, 9, 'LEN', 8) + l('#2f60d0', 'M0 13h16', 2),

        project: l(NAVY, 'M3.500.500h10v5h-10zM4 10.500h12l-4 5H0z') + l(RED, 'M8.500 6v5M6 8l2 3 3-3'),
        stretch: f('#c8f4fa', 'M.5.500h8v15h-8z', NAVY) + l(RED, 'M13.500 2v12M11 5l2-3 3 3M11 12l2 3 3-3'),
        corner: l(RED, 'M3.500 6V1.500h11v14h-3') + dots(BLACK, 'M2.500 8.500h6v7h-6z') + l(GREEN, 'M8 8l5-5M9 3.500h4v4'),
        rings: (o(NAVY, 8, 8, 7.5) + o(NAVY, 8, 8, 3.5)).replaceAll('<circle', '<circle class="smooth"'),
        spin: o(NAVY, 7, 11, 4).replace('<circle', '<circle class="smooth"') + l(RED, 'M1 6c1-7 11-8 13 0M11 5l3 2 2-4'),
        cross: l(NAVY, 'M0 5.500h15M4.500 0v13M9.500 0v10M0 3l15 10M15 2 3 15M5 12.500h11') + f(RED, 'M8 9h2v2H8z'),
        zAsk: t(RED, 0, 12, 'Z', 9) + t(GREEN, 6, 12, '=?', 9)
    };

    document.querySelectorAll('.toolbar').forEach(bar => {
        let html = '<span class="grip"></span>';
        bar.dataset.tools.split(' ').forEach(name => {
            if (name === '|') {
                html += '<span class="sep"></span>';
            } else {
                html += `<button class="tool" aria-label="${name}"><svg width="16" height="16" viewBox="0 0 16 16">${icons[name]}</svg></button>`;
            }
        });
        bar.innerHTML = html + '<button class="close" aria-label="关闭"><svg width="5" height="5" viewBox="0 0 5 5"><path stroke="#fff" stroke-width="2" d="M0 0l5 5M5 0 0 5"/></svg></button>';
    });
</script>
</body>
</html>
```
FILE: styles.css
```css
* {
    box-sizing: border-box;
}
body {
    margin: 0;
    padding: 4px 0 0 3px;
    height: 100vh;
    background: #0c0c0c;
    font-family: "Liberation Sans", "Noto Sans CJK SC", sans-serif;
    font-size: 12px;
    color: #333;
}
button {
    font: inherit;
    color: inherit;
    background: none;
    border: none;
    padding: 0;
    cursor: pointer;
}
svg {
    display: block;
    flex: none;
    overflow: visible;
}
.app {
    display: flex;
    flex-direction: column;
    height: 100%;
    overflow: hidden;
    background: #eef8fb;
}
.caret {
    width: 0;
    border: 2px solid transparent;
    border-top: 3px solid #333;
    border-bottom: none;
}
.caret.large {
    border-width: 4px 4px 0;
}
.caret.dim {
    border-top-color: #444;
}

/* title bar and tabs */
.header {
    display: flex;
    flex: none;
    margin-right: 3px;
    background: #3d3d3d;
}
.logo {
    flex: none;
    width: 37px;
    height: 40px;
    background: linear-gradient(#a8a8a8, #666);
    border: 1px solid #444;
}
.header-main {
    flex: 1;
    min-width: 0;
}
.titlebar {
    display: flex;
    height: 24px;
    background: #fff;
}
.titlebar button {
    display: flex;
    align-items: center;
}
.quick {
    display: flex;
    align-items: center;
    gap: 8px;
    width: 74px;
    padding-left: 9px;
    background: linear-gradient(#999, #555);
}
.doc-title {
    width: 119px;
    padding-right: 3px;
    font-family: "Noto Sans", sans-serif;
    font-size: 12px;
    line-height: 17px;
    color: #111;
    text-align: right;
    background: linear-gradient(#eefafc, #fff 60%, #cfe4f6);
}
.infobar {
    display: flex;
    align-items: center;
    flex: 1;
    gap: 8px;
    padding-right: 4px;
    color: #fff;
    background: linear-gradient(#8c8c8c, #4d4d4d);
    border-top: 1px solid #444;
}
.infobar .expand {
    width: 7px;
    padding-left: 4px;
}
.search {
    width: 178px;
    height: 21px;
    padding: 0 3px;
    font: italic 12px "Liberation Sans", "Noto Sans CJK SC", sans-serif;
    background: #fff;
    border: 1px solid #aaa;
}
.search::placeholder {
    color: #666;
}
.signin {
    gap: 4px;
}
.spacer {
    flex: 1;
}
.rule {
    width: 1px;
    height: 16px;
    background: #777;
}
.win-area {
    width: 123px;
}
.win-buttons {
    display: flex;
    height: 12px;
    margin-left: 20px;
    border: 1px solid #999;
    border-top: none;
    border-radius: 0 0 4px 4px;
}
.win-buttons button {
    flex: 3;
    justify-content: center;
    padding-bottom: 3px;
    border-right: 1px solid #aaa;
}
.win-buttons .wide {
    flex: 5;
    border-right: none;
}
.tabs {
    display: flex;
    height: 20px;
    padding-left: 5px;
}
.tab {
    padding: 0 10px;
    font-size: 12px;
    line-height: 23px;
    color: #f0f0f0;
    text-decoration: none;
}
.tab.active {
    margin-top: 3px;
    line-height: 17px;
    color: #222;
    background: #f6f6f6;
}
.ribbon-toggle {
    display: flex;
    align-items: center;
    margin-left: 21px;
}

/* ribbon */
.ribbon {
    display: flex;
    flex: none;
    height: 99px;
    margin: 0 4px 5px 0;
    background: #a3a3a3;
    border-bottom: 1px solid #eee;
    box-shadow: 0 5px #666;
}
.panel {
    display: flex;
    flex-direction: column;
    flex: none;
    background: linear-gradient(#fdfdfd, #efefef);
    border-right: 2px solid #9a9a9a;
}
.draw {
    width: 209px;
    background: #fdfdfd;
}
.modify {
    width: 132px;
    background: #fdfdfd;
}
.panel-body {
    display: flex;
    flex: 1;
    padding-top: 6px;
}
.panel-title {
    display: flex;
    align-items: center;
    justify-content: center;
    gap: 7px;
    height: 18px;
    background: #eee;
    border-top: 1px solid #ddd;
}
.big {
    display: flex;
    flex-direction: column;
    align-items: center;
    width: 40px;
    line-height: 16px;
    white-space: nowrap;
}
.big svg {
    margin-bottom: 6px;
}
.big .caret {
    margin-top: 3px;
}
.ln {
    fill: none;
    stroke: #444;
    stroke-width: 1.5px;
}
.pt {
    fill: #fff;
    stroke: #333;
}
.small-grid {
    display: grid;
    grid-template-columns: 24px 24px 36px 24px;
    grid-auto-rows: 22px;
    gap: 2px 5px;
    padding-left: 2px;
}
.small-grid.one {
    grid-template-columns: 36px;
    padding-left: 5px;
}
.small {
    display: flex;
    align-items: center;
    justify-content: center;
    border: 1px solid #dcdcdc;
    background: #fafafa;
}
.split {
    justify-content: space-between;
    padding: 0 4px 0 3px;
}
.single {
    align-items: center;
    width: 61px;
    padding: 5px 0;
    line-height: 18px;
    white-space: nowrap;
}
.single svg {
    margin-bottom: 4px;
}
.single .caret {
    margin-top: auto;
}
.ribbon-rest {
    flex: 1;
    background: linear-gradient(90deg, #8e8e8e, #b8b8b8);
}

/* drawing area */
.canvas {
    position: relative;
    flex: 1;
    border-top: 1px solid #aaa;
    margin-right: 5px;
    overflow: hidden;
    background-color: #212830;
    background-image:
        linear-gradient(#2f3741 1px, transparent 1px),
        linear-gradient(90deg, #2f3741 1px, transparent 1px),
        linear-gradient(#232b34 1px, transparent 1px),
        linear-gradient(90deg, #232b34 1px, transparent 1px);
    background-size: 49px 49px, 49px 49px, 5px 5px, 5px 5px;
    background-position: 0 10px, 26px 0, 0 0, 1px 0;
}
.view-label {
    height: 63px;
    padding: 5px 0 0 3px;
    line-height: 18px;
    color: #eee;
}
.dock {
    display: flex;
    flex-direction: column;
    align-items: flex-start;
    gap: 8px;
    margin-left: -2px;
}
.toolbar {
    display: flex;
    height: 22px;
    background: #f0f0f0;
}
.float {
    position: absolute;
}
.purge {
    left: 501px;
    top: 120px;
}
.symbols {
    left: 518px;
    top: 201px;
}
.dims {
    left: 359px;
    top: 232px;
    box-shadow: 0 1px #333;
}
.edit {
    left: 432px;
    top: 289px;
}
.grip {
    width: 8px;
    background: radial-gradient(#111 1px, transparent 1px) 0 0 / 3px 3px #777;
    border: 2px solid #686868;
}
.tool {
    position: relative;
    width: 23px;
    height: 22px;
    padding: 0 0 0 3px;
}
.tool svg {
    shape-rendering: crispEdges;
}
.tool .smooth {
    shape-rendering: auto;
}
.tool text {
    font-family: "Liberation Mono", "Noto Sans CJK SC", monospace;
}
.tool .serif {
    font-family: "Liberation Serif", serif;
    font-weight: bold;
}
.flyouts .tool::after {
    content: "";
    position: absolute;
    right: 3px;
    bottom: 2px;
    border-left: 5px solid transparent;
    border-bottom: 5px solid #000;
}
.sep {
    width: 1px;
    margin: 2px 3px 2px 2px;
    background: #777;
}
.close {
    display: flex;
    width: 8px;
    padding: 4px 0 0 1px;
    background: #636363;
}

.doc-buttons {
    position: absolute;
    right: 12px;
    top: 9px;
    display: flex;
    gap: 10px;
}
.viewcube {
    position: absolute;
    right: 8px;
    top: 30px;
    display: grid;
    grid-template-columns: 20px 42px 20px;
    grid-template-rows: 20px 44px 20px;
    place-items: center;
    color: #b8bcc2;
    background: radial-gradient(circle, transparent 27px, #464b56 28px, #464b56 34px, transparent 35px);
}
.north, .south {
    grid-column: 2;
}
.west, .east {
    grid-row: 2;
}
.face {
    grid-area: 2 / 2;
    width: 30px;
    height: 30px;
    font-size: 18px;
    line-height: 28px;
    color: #858b98;
    background: #c6c8cc;
    border: 1px solid #999;
}
.wcs {
    position: absolute;
    right: 26px;
    top: 123px;
    display: flex;
    align-items: center;
    gap: 4px;
    height: 18px;
    padding: 0 4px;
    font-size: 11px;
    color: #555b66;
    background: #9599a3;
    border: 1px solid #aaaeb6;
    border-radius: 4px;
}
.navbar {
    position: absolute;
    right: 4px;
    top: 166px;
    display: flex;
    flex-direction: column;
    align-items: center;
    gap: 8px;
    width: 32px;
    height: 212px;
    padding-top: 18px;
    background: #62666d;
    border: 1px solid #74787f;
    border-radius: 4px;
}
.navbar path, .navbar circle {
    fill: none;
    stroke: #484c54;
}
.navbar .caret {
    border-top-color: #484c54;
}
.crosshair {
    position: absolute;
    left: 437px;
    top: 290px;
    clip-path: inset(22px 0 0 0);
}
.crosshair path, .ucs-axis path {
    fill: none;
    stroke: #fff;
}
.ucs-axis {
    position: absolute;
    left: 8px;
    bottom: -4px;
}
.command {
    position: absolute;
    left: 216px;
    bottom: 0;
    display: flex;
    flex-direction: column;
    align-items: flex-start;
    gap: 1px;
    font-size: 13px;
}
.command p {
    height: 15px;
    margin: 0;
    padding: 0 1px;
    font-family: "Noto Sans CJK SC", sans-serif;
    line-height: 14px;
    white-space: pre;
    color: #f0f0f0;
    background: #4c5055;
}
.command .old {
    color: #c4c6c8;
}
.command code {
    font-family: "DejaVu Sans Mono", monospace;
    font-size: 11px;
}
.watermark {
    position: absolute;
    right: 4px;
    bottom: 12px;
    display: flex;
    align-items: center;
    gap: 3px;
    opacity: 0.85;
}
.site {
    font: bold 27px/34px "Noto Sans CJK SC", sans-serif;
    color: #1f78bd;
}
.url {
    font: bold 20px/24px "Liberation Serif", serif;
    color: #2a8f2c;
}
```
